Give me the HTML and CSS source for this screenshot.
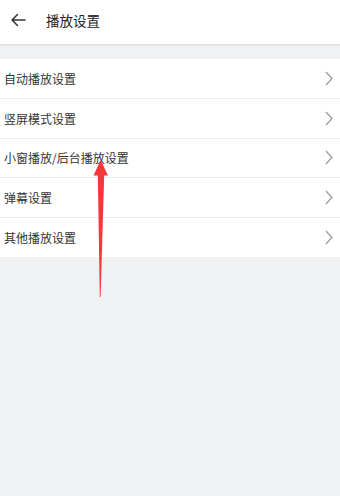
FILE: index.html
```html
<!DOCTYPE html>
<html lang="zh">
<head>
<meta charset="utf-8">
<link rel="stylesheet" href="styles.css">
</head>
<body>
<div class="page">
  <header class="topbar">
    <svg class="back" width="16" height="14" viewBox="0 0 16 14"><path d="M15 7H2M7.5 1.5L2 7l5.5 5.5" fill="none" stroke="#333" stroke-width="1.5" stroke-linecap="round" stroke-linejoin="round"/></svg>
    <span class="title">播放设置</span>
  </header>
  <div class="gap"></div>
  <ul class="list">
    <li class="row"><span>自动播放设置</span><svg class="chev" width="8" height="15" viewBox="0 0 8 15"><path d="M1 1l6 6.5L1 14" fill="none" stroke="#9a9a9a" stroke-width="1.2"/></svg></li>
    <li class="row"><span>竖屏模式设置</span><svg class="chev" width="8" height="15" viewBox="0 0 8 15"><path d="M1 1l6 6.5L1 14" fill="none" stroke="#9a9a9a" stroke-width="1.2"/></svg></li>
    <li class="row"><span>小窗播放/后台播放设置</span><svg class="chev" width="8" height="15" viewBox="0 0 8 15"><path d="M1 1l6 6.5L1 14" fill="none" stroke="#9a9a9a" stroke-width="1.2"/></svg></li>
    <li class="row"><span>弹幕设置</span><svg class="chev" width="8" height="15" viewBox="0 0 8 15"><path d="M1 1l6 6.5L1 14" fill="none" stroke="#9a9a9a" stroke-width="1.2"/></svg></li>
    <li class="row last"><span>其他播放设置</span><svg class="chev" width="8" height="15" viewBox="0 0 8 15"><path d="M1 1l6 6.5L1 14" fill="none" stroke="#9a9a9a" stroke-width="1.2"/></svg></li>
  </ul>
  <svg class="annot" width="340" height="496" viewBox="0 0 340 496">
    <polygon points="100.7,160 93.5,175.5 108,175.5" fill="#f7373b"/>
    <polygon points="97.8,175 104.2,175 100.6,297 99.8,297" fill="#f7373b"/>
  </svg>
</div>
</body>
</html>
```
FILE: styles.css
```css
html, body {
  margin: 0;
  padding: 0;
  background: #f0f1f3;
}
.page {
  position: relative;
  width: 340px;
  height: 496px;
  background: #f0f1f3;
  font-family: "Noto Sans CJK SC", "Noto Sans", sans-serif;
  overflow: hidden;
}
.topbar {
  height: 44px;
  background: #fff;
  display: flex;
  align-items: center;
  border-bottom: 1px solid #dedede;
  box-shadow: 0 1px 1px rgba(0,0,0,0.04);
}
.back {
  margin-left: 10px;
  margin-top: -4px;
}
.title {
  margin-left: 20px;
  margin-top: -4px;
  font-size: 13.5px;
  color: #222;
}
.gap {
  height: 14px;
}
.list {
  list-style: none;
  margin: 0;
  padding: 0;
  background: #fff;
}
.row {
  height: 38.8px;
  display: flex;
  align-items: center;
  justify-content: space-between;
  padding: 0 7px 0 4px;
  border-bottom: 1px solid #ececec;
  font-size: 12px;
  color: #333;
}
.row.last {
  border-bottom: none;
}
.annot {
  position: absolute;
  left: 0;
  top: 0;
  pointer-events: none;
}
```
